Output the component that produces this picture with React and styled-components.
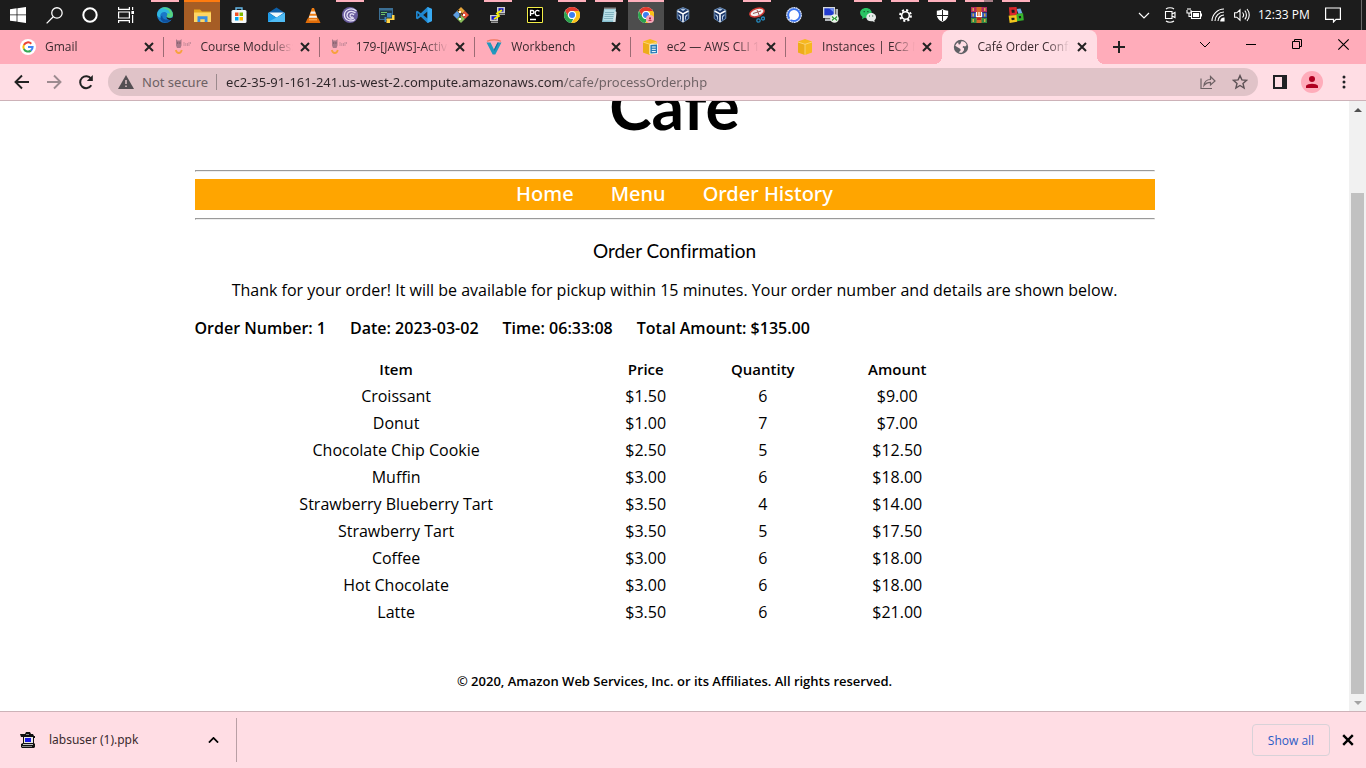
import React from "react";
import styled, { createGlobalStyle, css } from "styled-components";

const GlobalStyle = createGlobalStyle`
  *, *::before, *::after { box-sizing: border-box; }
  body { margin: 0; background: #fff; }
  button, input { font: inherit; color: inherit; }
`;

const uiFont = `"Segoe UI", "Noto Sans", sans-serif`;
const compactFont = `"Segoe UI", "Open Sans", sans-serif`;
const pageFont = `"Lucida Sans", "Lucida Grande", "Open Sans", sans-serif`;
const comicFont = `"Comic Sans MS", "Lato", sans-serif`;

const Shell = styled.div`
  display: flex;
  flex-direction: column;
  height: 100vh;
  overflow: hidden;
  font-family: ${uiFont};
  font-size: 12px;
`;

const PlainButton = styled.button`
  display: flex;
  align-items: center;
  justify-content: center;
  flex: none;
  padding: 0;
  border: 0;
  background: transparent;
`;

/* ---------- Taskbar ---------- */

const Taskbar = styled.header`
  display: flex;
  flex: none;
  height: 30px;
  background: #1c1c1c;
  color: #fff;
`;

const SystemKeys = styled.div`
  display: flex;
  margin-right: 3px;
`;

const AppKeys = styled.nav`
  display: flex;
  gap: 1px;
  flex: 1;
`;

const TaskKey = styled(PlainButton)`
  position: relative;
  width: 36px;
  height: 30px;
  background: ${(p) => p.$fill || "transparent"};
  ${(p) =>
    p.$mark &&
    css`
      &::before {
        content: "";
        position: absolute;
        top: 0;
        left: ${p.$wide ? 0 : 4}px;
        right: ${p.$wide ? 0 : 4}px;
        height: 2px;
        background: ${p.$mark};
      }
    `}
`;

const Tray = styled.div`
  display: flex;
  align-items: center;
  gap: 8px;
  padding-right: 4px;
`;

const Overflow = styled(PlainButton)`
  width: 12px;
  height: 30px;
  margin-right: 4px;
`;

const Clock = styled.time`
  font-family: ${compactFont};
  font-size: 12px;
  line-height: 16px;
  width: 59px;
  white-space: nowrap;
`;

const DesktopEdge = styled.span`
  width: 1px;
  height: 30px;
  margin-left: 12px;
  background: #6a6a6a;
`;

/* ---------- Tab strip ---------- */

const TabStrip = styled.div`
  display: flex;
  flex: none;
  height: 34px;
  padding-left: 9px;
  background: #ffacba;
`;

const TabList = styled.div`
  display: flex;
  flex: 1;
  min-width: 0;
`;

const Tab = styled.div`
  position: relative;
  display: flex;
  align-items: center;
  flex: 1 1 0;
  min-width: 0;
  padding: 0 7px 0 11px;
  border-radius: 8px 8px 0 0;
  background: ${(p) => (p.$active ? "#ffdde4" : "transparent")};
  ${(p) =>
    p.$divider &&
    css`
      &::after {
        content: "";
        position: absolute;
        right: 0;
        top: 7px;
        width: 1px;
        height: 20px;
        background: #9c6b74;
      }
    `}
  ${(p) =>
    p.$active &&
    css`
      &::before,
      &::after {
        content: "";
        position: absolute;
        bottom: 0;
        width: 8px;
        height: 8px;
      }
      &::before {
        left: -8px;
        background: radial-gradient(circle at 0 0, #ffacba 8px, #ffdde4 8px);
      }
      &::after {
        right: -8px;
        background: radial-gradient(circle at 100% 0, #ffacba 8px, #ffdde4 8px);
      }
    `}
`;

const TabTitle = styled.span`
  flex: 1;
  min-width: 0;
  margin: 0 4px 0 9px;
  overflow: hidden;
  white-space: nowrap;
  font-family: ${compactFont};
  line-height: 18px;
  color: #3a2a2e;
  mask-image: linear-gradient(90deg, #000 75%, transparent 100%);
`;

const TabClose = styled(PlainButton)`
  width: 16px;
  height: 16px;
  color: #222;
`;

const StripEnd = styled.div`
  display: flex;
  justify-content: space-between;
  flex: none;
  width: 269px;
`;

const NewTab = styled(PlainButton)`
  width: 28px;
  height: 34px;
  margin-left: 8px;
`;

const WindowKeys = styled.div`
  display: flex;
`;

const WindowKey = styled(PlainButton)`
  width: 46px;
  height: 28px;
`;

/* ---------- Toolbar ---------- */

const Toolbar = styled.div`
  display: flex;
  align-items: center;
  flex: none;
  height: 37px;
  padding: 0 6px;
  border-bottom: 1px solid #cdb2b8;
  background: #ffdde4;
`;

const ToolKey = styled(PlainButton)`
  width: 32px;
  height: 28px;
`;

const AddressBar = styled.form`
  display: flex;
  align-items: center;
  flex: 1;
  height: 28px;
  margin: 0 6px;
  padding: 0 2px 0 10px;
  border-radius: 14px;
  background: #e0c3c8;
`;

const Security = styled(PlainButton)`
  gap: 8px;
  padding-right: 8px;
  border-right: 1px solid #9b8a8d;
  font-size: 13px;
  line-height: 16px;
  color: #6d6164;
`;

/* The host is darker than the path that follows it. */
const Address = styled.input`
  flex: 1;
  min-width: 0;
  height: 24px;
  margin-left: 9px;
  padding: 0;
  border: 0;
  outline: 0;
  font-size: 13px;
  color: #2e2629;
  background: linear-gradient(90deg, #2e2629 338px, #6d6164 338px);
  background-clip: text;
  -webkit-text-fill-color: transparent;
`;

const Avatar = styled.span`
  display: flex;
  align-items: center;
  justify-content: center;
  width: 22px;
  height: 22px;
  border-radius: 50%;
  background: #ffacba;
`;

/* ---------- Web page ---------- */

const Viewport = styled.div`
  display: flex;
  flex: 1;
  min-height: 0;
  background: #fff;
`;

const Scroller = styled.div`
  display: flex;
  flex-direction: column;
  justify-content: flex-end;
  flex: 1;
  min-width: 0;
  overflow: hidden;
`;

const Page = styled.main`
  width: 960px;
  max-width: 100%;
  margin: 0 auto;
  padding-bottom: 20px;
  font-family: ${pageFont};
  font-size: 16px;
  line-height: 22px;
  color: #000;
  text-align: center;
`;

const SiteTitle = styled.h1`
  margin: 0 0 24px;
  font-family: ${comicFont};
  font-size: 64px;
  font-weight: 700;
  line-height: 80px;
  font-variant-ligatures: none;
`;

const Rule = styled.hr`
  height: 2px;
  margin: 0;
  border: 1px solid;
  border-color: #9a9a9a #eee #eee #9a9a9a;
`;

const SiteNav = styled.nav`
  display: flex;
  justify-content: center;
  gap: 37px;
  margin: 7px 0 8px;
  background: #ffa500;
  font-family: "Lucida Sans", "Noto Sans", sans-serif;
  font-size: 20px;
  line-height: 30px;
  padding-bottom: 1px;
  font-weight: 500;
`;

const NavLink = styled.a`
  color: #fff;
  text-decoration: none;
`;

const Heading = styled.h2`
  margin: 18px 0 15px;
  font-family: ${comicFont};
  font-size: 19px;
  font-weight: 400;
  line-height: 26px;
  font-variant-ligatures: none;
`;

const Message = styled.p`
  margin: 0 0 16px;
`;

const Summary = styled.p`
  display: flex;
  gap: 24px;
  margin: 0 0 16px;
  font-weight: 600;
`;

const OrderTable = styled.table`
  width: 80%;
  table-layout: fixed;
  border-collapse: collapse;
`;

const Col = styled.col`
  width: ${(p) => p.$share}%;
`;

const HeadCell = styled.th`
  height: 27px;
  padding: 0;
  font-size: 15px;
  font-weight: 600;
`;

const Cell = styled.td`
  height: 27px;
  padding: 0;
`;

const Copyright = styled.footer`
  margin-top: 46px;
  font-size: 13px;
  line-height: 20px;
  font-weight: 600;
`;

const ScrollBar = styled.div`
  display: flex;
  flex-direction: column;
  align-items: center;
  justify-content: space-between;
  flex: none;
  width: 17px;
  background: #f1f1f1;
`;

const ScrollKey = styled(PlainButton)`
  width: 17px;
  height: 17px;
`;

const ScrollTrack = styled.div`
  display: flex;
  flex-direction: column;
  justify-content: flex-end;
  flex: 1;
  width: 13px;
`;

const ScrollThumb = styled.div`
  height: 87%;
  background: #c1c1c1;
`;

/* ---------- Downloads ---------- */

const Downloads = styled.footer`
  display: flex;
  align-items: center;
  flex: none;
  height: 57px;
  padding: 0 10px 0 20px;
  border-top: 1px solid #cdb2b8;
  background: #ffdde4;
`;

const DownloadItem = styled.div`
  display: flex;
  align-items: center;
  width: 217px;
  height: 44px;
  border-right: 1px solid #b99fa5;
`;

const FileName = styled.a`
  flex: 1;
  margin-left: 13px;
  color: #3a2a2e;
  line-height: 18px;
  text-decoration: none;
`;

const FileMenu = styled(PlainButton)`
  width: 16px;
  height: 16px;
  margin-right: 15px;
`;

const ShowAll = styled(PlainButton)`
  width: 78px;
  height: 32px;
  margin-left: auto;
  border: 1px solid #d8d2d8;
  border-radius: 4px;
  font-family: ${compactFont};
  color: #2a5bc4;
`;

const CloseBar = styled(PlainButton)`
  width: 16px;
  height: 16px;
  margin-left: 10px;
`;

/* ---------- Icons ---------- */

const Svg = ({ s = 16, w = s, h = s, vb = "0 0 16 16", children, ...rest }) => (
  <svg width={w} height={h} viewBox={vb} fill="none" aria-hidden="true" {...rest}>
    {children}
  </svg>
);

const Cross = ({ s = 10, weight = 2 }) => (
  <Svg s={s} vb="0 0 10 10" stroke="currentColor" strokeWidth={weight}>
    <path d="M1 1l8 8M9 1L1 9" />
  </Svg>
);

const WindowsLogo = () => (
  <Svg>
    <path fill="#fff" d="M0 2.2l6.6-.9v6.2H0zM7.4 1.2L16 0v7.5H7.4zM0 8.3h6.6v6.3L0 13.7zM7.4 8.3H16V16l-8.6-1.2z" />
  </Svg>
);
const SearchIcon = () => (
  <Svg s={17} stroke="#fff" strokeWidth="1.2">
    <circle cx="10.3" cy="5.6" r="4.9" />
    <path d="M6.8 9.2L.6 15.4" />
  </Svg>
);
const CortanaIcon = () => (
  <Svg s={16} stroke="#fff" strokeWidth="2">
    <circle cx="8" cy="8" r="6.7" />
  </Svg>
);
const TaskViewIcon = () => (
  <Svg stroke="#fff" strokeWidth="1.2">
    <path d="M.6 0v2.4h10.8V0M.6 16v-2.4h10.8V16M.6 5h10.8v6H.6zM14.6 0v3M14.6 8v8" />
    <path d="M13.4 4h2.6v3h-2.6z" fill="#fff" stroke="none" />
  </Svg>
);
const EdgeIcon = () => (
  <Svg>
    <circle cx="8" cy="8" r="8" fill="#1a78c8" />
    <path fill="#56d37f" d="M3 2C6 -.6 11-.4 14 3c2.300 2.600 2.600 6 .8 7.200-1.200.8-4 .9-5 0-.8-.8.8-1.500.4-3.400C9.600 4 6 2.600 3 2z" />
    <path fill="#2fb6df" d="M0 8C.2 3.500 3.500 1 7 1.400c4 .4 6.200 3.200 6 5.600-.8-.8-1.800-1-2.600-.4C9 4.800 6.500 4.400 4.500 6 3 7.500 3 9.500 3.800 11 2 10.500.6 9.500 0 8z" />
    <path fill="#0f519f" d="M5.200 8.500c-.2 4 4.300 5.500 9.300 3.300C12 16.500 5 17 3.500 11.500c.1-1.600.7-2.500 1.700-3z" />
    <path fill="#1c1c1c" d="M9.600 9.600c.5 1.700 3.600 2 6.400 1l-1 1.800c-2.600 1.200-5.800.2-5.400-2.800z" />
  </Svg>
);
const FolderIcon = () => (
  <Svg w={17} h={15} vb="0 0 17 15">
    <path fill="#e8a71d" d="M0 1.500h6l2 2h9v3H0z" />
    <path fill="#ffd664" d="M0 4.500h17V14H0z" />
    <path fill="#3b8fe0" d="M3.500 14V8.200h10V14h-2.800v-2.800H6.300V14z" />
  </Svg>
);
const StoreIcon = () => (
  <Svg>
    <path stroke="#66b8e8" strokeWidth="1.400" d="M5 4V1h6v3" />
    <rect x=".5" y="3" width="15" height="13" rx="1.500" fill="#f4f8fb" />
    <path fill="#f25022" d="M4 5.500h3.500V9H4z" />
    <path fill="#7fba00" d="M8.500 5.500H12V9H8.500z" />
    <path fill="#00a4ef" d="M4 10h3.500v3.500H4z" />
    <path fill="#ffb900" d="M8.500 10H12v3.500H8.500z" />
  </Svg>
);
const MailIcon = () => (
  <Svg w={17} h={16} vb="0 0 17 16">
    <path fill="#0e5fa8" d="M0 6l8.500-5.500L17 6v2H0z" />
    <path fill="#eef8fd" d="M1 5.500h15L8.500 11z" />
    <path fill="#1f9ce8" d="M0 5.500l8.500 5 8.500-5V15H0z" />
    <path fill="#50bcf5" d="M0 15L17 6v9z" />
  </Svg>
);
const ConeIcon = () => (
  <Svg>
    <path fill="#ef7d12" d="M7 1h2l4 11H3z" />
    <path fill="#f2f2f2" d="M6 4.500h4l.8 2.300H5.200zM4.500 8.700h7l.7 2H3.800z" />
    <path fill="#e06c08" d="M2.500 11.500h11L15.500 16H.5z" />
    <path fill="#f7a24b" d="M4 12h8v1.500H4z" />
  </Svg>
);
const BitTorrentIcon = () => (
  <Svg>
    <circle cx="8" cy="8" r="8" fill="#695c9e" />
    <path
      stroke="#e6e1f5"
      strokeWidth="1.300"
      d="M14.500 4C9-.5 2 3 2.400 8.500c.5 5 7 7 10.600 4M13.500 6C9.500 2.500 4.800 5 5 8.800c.4 3.200 4.500 4.200 7 2M12 8c-1.800-2-4-1-4 .8 0 1.300 1.700 1.900 2.900 1"
    />
  </Svg>
);
const IdleIcon = () => (
  <Svg>
    <path fill="#3c6f94" d="M0 1h14v12H0z" />
    <path fill="#1f3847" d="M1 3.500h12V12H1z" />
    <path stroke="#70c26a" d="M2 5.500h6M2 7.500h4" />
    <path fill="#3d83bd" d="M8 6h4.500v4.500H7V15H5.500v-5H8z" />
    <path fill="#ffd345" d="M15.500 8v5H11v3H7.500v-4.500H13V8z" />
  </Svg>
);
const CodeIcon = () => (
  <Svg>
    <path
      fill="#1f87d0"
      d="M11.500 0L16 2v12l-4.500 2L4.800 9.700 1.500 12.300 0 11.500v-7l1.500-.8 3.300 2.600zM11.500 4.600L7.200 8l4.300 3.400zM1.600 6v4l2-2z"
      fillRule="evenodd"
    />
    <path fill="#38aaf2" d="M11.500 0L16 2v12l-4.500 2z" />
  </Svg>
);
const GitIcon = () => (
  <Svg>
    <path fill="#e6a43a" d="M8 0l4 4-4 4-4-4z" />
    <path fill="#5d9de0" d="M4 4l4 4-4 4-4-4z" />
    <path fill="#e7553b" d="M12 4l4 4-4 4-4-4z" />
    <path fill="#8bbf5c" d="M8 8l4 4-4 4-4-4z" />
    <path stroke="#1b1b1b" d="M5 3l6.500 6M7 5v8" />
    <path fill="#fff" d="M6 4h2v2H6zM10 7h2v2h-2zM6 11h2v2H6z" />
  </Svg>
);
const Computer = ({ x, y }) => (
  <g transform={`translate(${x} ${y})`}>
    <path fill="#ccc" d="M0 0h8v6H0z" />
    <path fill="#1616c8" d="M1.500 1.200h5v3.500h-5z" />
    <path fill="#999" d="M1 6.500h7V8H1z" />
  </g>
);
const PuttyIcon = () => (
  <Svg>
    <Computer x={7} y={0} />
    <Computer x={0} y={8} />
    <path stroke="#f4f000" strokeWidth="1.800" d="M12 3L7 6.500l2 2.500-5 3" />
  </Svg>
);
const PyCharmIcon = () => (
  <Svg>
    <path fill="#000" stroke="#f3ee46" d="M.5.5h15v15H.5z" />
    <path
      stroke="#fff"
      strokeWidth="1.300"
      d="M3.500 9V3.500h1.800a1.600 1.600 0 010 3.200H3.500M12.500 4.200c-3-2-4.500 0-4.300 2.200.2 2.200 2.300 3 4.300 1.600M3 12.500h6"
    />
  </Svg>
);
const ChromeIcon = ({ badge }) => (
  <Svg>
    <circle cx="8" cy="8" r="8" fill="#fff" />
    <path fill="#e33b2e" d="M1.100 4A8 8 0 0115 4.100H8A4 4 0 004.500 9.800z" />
    <path fill="#2ba24c" d="M1.100 4l3.500 6A4 4 0 008 12l1.400-.2L7.300 16A8 8 0 011.100 4z" />
    <path fill="#fbc116" d="M15 4.100A8 8 0 017.300 16l4.200-6A4 4 0 0011 5.200L9 4.100z" />
    <circle cx="8" cy="8" r="3.900" fill="#fff" />
    <circle cx="8" cy="8" r="3" fill="#3d7ff0" />
    {badge && <circle cx="12" cy="12" r="4" fill="#f7a8b8" />}
    {badge && <circle cx="12" cy="11.200" r="1" fill="#ad0b34" />}
    {badge && <path d="M10.200 13.800c.4-1.500 3.200-1.500 3.600 0z" fill="#ad0b34" />}
  </Svg>
);
const NotepadIcon = () => (
  <Svg>
    <path fill="#86bfcf" d="M3 2h12l-1.500 13H1z" />
    <path fill="#b9e0e8" d="M3.500 3h10.800L13 13.500H2z" />
    <path stroke="#5d93a5" d="M4 5.500h9M3.700 7.500h9M3.400 9.500h9M3 11.500h9" strokeWidth=".6" />
    <path stroke="#e8edf0" strokeDasharray="1 1" strokeWidth="2" d="M3.500 1.500h11" />
    <path fill="#d7e4e8" d="M14 4l1.500 1-1 10H12z" />
  </Svg>
);
const BoxIcon = () => (
  <Svg>
    <path fill="#1b3668" stroke="#7fa4cf" strokeWidth=".8" d="M8 .6L13.800 3v8.500L8 15.400l-5.800-3.900V3z" />
    <path stroke="#fff" strokeWidth="1.500" d="M2.600 4L8 7l5.400-3M8 7v8" />
    <path fill="#b5cae3" d="M3.500 7L6 9v4l-1-.8V10L3.500 8.500zM12.500 7L10 9v4l1-.8V10l1.500-1.500zM5.500 2.500L8 1.500l2.500 1L8 4z" />
  </Svg>
);
const SnipIcon = () => (
  <Svg>
    <ellipse cx="8" cy="5.500" rx="7.400" ry="4" transform="rotate(-18 8 5.500)" fill="#f4f1f1" stroke="#d23a35" strokeWidth="1.500" />
    <path stroke="#9a5655" d="M4 6.500l8-2.500M8 3l3 7" />
    <circle cx="9.500" cy="13.500" r="1.700" stroke="#2589bd" strokeWidth="1.300" />
    <circle cx="14" cy="11.500" r="1.500" stroke="#2589bd" strokeWidth="1.300" />
  </Svg>
);
const SignalIcon = () => (
  <Svg>
    <circle cx="8" cy="8" r="7.300" fill="#3c75ef" stroke="#dfe8fd" strokeWidth="1.200" strokeDasharray="2 .4" />
    <path fill="#fff" d="M8 3a5 5 0 11-2.200 9.500l-2.600.6.700-2.500A5 5 0 018 3z" />
  </Svg>
);
const RemoteIcon = () => (
  <Svg>
    <path fill="#d5d9dc" d="M0 0h12v11H0z" />
    <path fill="#223bd0" d="M1.300 1.300h9.400v7H1.300z" />
    <path fill="#7290f0" d="M6 1.300h4.700v4z" />
    <path fill="#b3b7bb" d="M12.500 2H15v8h-2.500zM2 11.500h7V14H2z" />
    <circle cx="11.500" cy="11.500" r="4.300" fill="#ecf4ea" />
    <path stroke="#2d9b38" strokeWidth="1.200" d="M9 9.500l2 2-2 2M14 9.500l-2 2 2 2" />
  </Svg>
);
const WeChatIcon = () => (
  <Svg>
    <path
      fill="#2bc464"
      d="M6 1c3.400 0 5.800 2.200 5.800 5s-2.400 5-5.800 5l-1.500-.2L2 12.300l.5-2.300A4.900 4.900 0 01.1 6C.1 3.200 2.600 1 6 1z"
    />
    <path
      fill="#e7ebe9"
      d="M11 6c2.900 0 5 1.900 5 4.200 0 1.300-.7 2.500-1.700 3.200l.4 1.800-2-1c-4 .7-6.400-1.500-6.400-4C6.300 7.900 8.300 6 11 6z"
    />
    <path fill="#174f2d" d="M3.600 4h1.200v1.200H3.600zM7.300 4h1.200v1.200H7.300zM9 8.500h1v1H9zM12.200 8.500h1v1h-1z" />
  </Svg>
);
const GearIcon = () => (
  <Svg s={13} stroke="#fff">
    <circle cx="8" cy="8" r="6.600" strokeWidth="2.600" strokeDasharray="2.600 2.580" />
    <circle cx="8" cy="8" r="4.700" strokeWidth="1.900" />
  </Svg>
);
const ShieldIcon = () => (
  <Svg s={13}>
    <path fill="#fff" d="M8 0c2 1.600 4 2 7 2.200v5C15 11 12 14.500 8 16 4 14.500 1 11 1 7.200v-5C4 2 6 1.600 8 0z" />
    <path stroke="#1c1c1c" strokeWidth="1.200" d="M8 1v14M1 8h14" />
  </Svg>
);
const WinRarIcon = () => (
  <Svg>
    <path fill="#b52b62" d="M0 0h16v5H0z" />
    <path fill="#3557bd" d="M0 5.500h16v5H0z" />
    <path fill="#328a42" d="M0 11h16v5H0z" />
    <path fill="#d7aa42" d="M1.500 1H3v3H1.500zM13 1h1.500v3H13zM1.500 6.500H3v3H1.500zM13 6.500h1.500v3H13zM1.500 12H3v3H1.500zM13 12h1.500v3H13z" />
    <path fill="#d6692a" d="M5.500 0h5v16h-5z" />
    <path stroke="#fff" strokeWidth="1.200" d="M5.500 5v4.500h5V5M8 5v4" />
    <path fill="#b51f1f" d="M6 10.500h4V13H6z" />
  </Svg>
);
const BlocksIcon = () => (
  <Svg>
    <path fill="#72afe3" d="M8.500 2l4-.5 2 5-4 .5z" />
    <path stroke="#d9272c" strokeWidth="2.400" d="M2.200 1.500l5.300-.3.500 5.600-5.300.4z" />
    <path stroke="#35b42b" strokeWidth="2.400" d="M9.500 8l4.500-.5.5 4.700-4.500.6z" />
    <path stroke="#f1c51d" strokeWidth="2.400" d="M2 9.800l5.500-.5.400 4.500-5.200.8z" />
  </Svg>
);

const Chevron = ({ w = 12, weight = 1.2, up }) => (
  <Svg w={w} h={w / 2 + 1} vb="0 0 12 7" stroke="currentColor" strokeWidth={weight}>
    <path d={up ? "M1 6l5-5 5 5" : "M1 1l5 5 5-5"} />
  </Svg>
);
const MeetIcon = () => (
  <Svg stroke="#fff" strokeWidth="1.100">
    <path d="M3.500 4.500h6.500v7H3.500zM10 7l3-1.500v5L10 9M4 2c2-1.600 6-1.600 8 0M4 14c2 1.600 6 1.600 8 0" />
  </Svg>
);
const BatteryIcon = () => (
  <Svg stroke="#fff" strokeWidth="1.100">
    <path d="M5.500 4.500h9v7h-9zM15.500 6.500v3M1 3v3h4V3M2 1v2M4 1v2M3 6v3.500h2" />
    <path fill="#fff" stroke="none" d="M7 6h6v4H7z" />
  </Svg>
);
const WifiIcon = () => (
  <Svg stroke="#fff" strokeWidth="1.100">
    <path d="M2 14C2 7.500 7.500 2 14 2M5 14c0-5 4-9 9-9M8 14c0-3.300 2.700-6 6-6" />
    <path d="M10.800 14a3 3 0 013.200-3v3z" fill="#fff" />
  </Svg>
);
const VolumeIcon = () => (
  <Svg stroke="#fff" strokeWidth="1.100">
    <path d="M.6 5.800h2.200L6 2.800v10.400l-3.200-3H.600zM8.500 5.500c1.300 1.400 1.300 3.600 0 5M10.800 3.600c2.200 2.500 2.200 6.300 0 8.800M13 2c3 3.500 3 8.500 0 12" />
  </Svg>
);
const NoticeIcon = () => (
  <Svg stroke="#fff" strokeWidth="1.200">
    <path d="M.6 1h14.800v11.400H11L8.500 15v-2.600H.6z" />
  </Svg>
);

const GoogleIcon = () => (
  <Svg>
    <circle cx="8" cy="8" r="8" fill="#fff" />
    <g strokeWidth="2">
      <path stroke="#ea4335" d="M11.300 4.700A4.600 4.600 0 003.900 6" />
      <path stroke="#fbbc05" d="M3.900 5.900a4.600 4.600 0 000 4.200" />
      <path stroke="#34a853" d="M3.900 10a4.600 4.600 0 007 1.600" />
      <path stroke="#4285f4" d="M8 8h4.600a4.600 4.600 0 01-1.700 3.600" />
    </g>
  </Svg>
);
const CourseIcon = () => (
  <Svg>
    <g fill="#9a7080">
      <path d="M1 0l1.500 1.500h2.500L6.500 0v6.500L5.500 9h-3.500L1 6.500z" opacity=".85" />
      <path d="M8.500 3h1v4h-1zM10.300 4h1v3h-1zM12 4h1v3h-1zM13.500 3h1v4h-1zM15 3h1v2h-1z" opacity=".5" />
    </g>
    <path fill="#5c4550" d="M2.200 3.500h1v1h-1zM4.400 3.500h1v1h-1z" />
    <path stroke="#f6a13c" strokeWidth="1.800" d="M.8 11c1 4 5 4 6 0" />
  </Svg>
);
const WorkbenchIcon = () => (
  <Svg>
    <path fill="#2298bd" d="M.5 3.500h4L8 10.500l3.500-7h4L9.300 15.500H6.700z" />
    <path stroke="#f0765b" strokeWidth="1.200" d="M1 2.200c4-1.600 10-1.600 14 0" />
    <path fill="#176e99" d="M8 10.500l3.500-7h1.200L8.500 12z" />
  </Svg>
);
const CubeIcon = ({ doc }) => (
  <Svg>
    <path fill="#f6b81f" d="M8 0l7 2.500v11L8 16l-7-2.500v-11z" />
    <path fill="#e09a16" d="M1 3.500l7 2V16l-7-2.500z" opacity=".4" />
    <path stroke="#fbd989" strokeWidth=".8" d="M1 3l7 2.300L15 3M8 5.300V16" />
    {doc && <path fill="#2479b5" stroke="#fff" strokeWidth=".8" d="M8 5.500l7.500-.5v9.500L8 15z" />}
    {doc && <path stroke="#fff" d="M9.800 8h4M9.800 10.300h4M9.800 12.600h4" />}
  </Svg>
);
const GlobeIcon = () => (
  <Svg>
    <circle cx="8" cy="8" r="7.200" fill="#5f6065" />
    <path
      fill="#ffdde4"
      d="M8.500 2.200c2.500-.2 4.600 1.400 5.200 3.700l-1.500 1.500-2-.3-.7 1.200 1.500 1v2l-1.800 2.300c-1.200.4-2.400.2-3.500-.4l1.800-1.500V10L5 8.500 2.200 6.800c.6-1.500 1.600-2.700 3-3.600l.3 2L7 5.500z"
    />
  </Svg>
);

const ArrowIcon = ({ flip }) => (
  <Svg stroke={flip ? "#9d8b90" : "#222"} strokeWidth="1.900">
    <path d={flip ? "M1 8h13M8 1.500L14.500 8 8 14.500" : "M15 8H2M8 1.500L1.500 8 8 14.500"} />
  </Svg>
);
const ReloadIcon = () => (
  <Svg stroke="#222" strokeWidth="2">
    <path d="M13.300 11.300A6 6 0 1113 4.600" />
    <path d="M14.800 1v6h-6z" fill="#222" stroke="none" />
  </Svg>
);
const WarningIcon = () => (
  <Svg w={16} h={14} vb="0 0 16 14">
    <path fill="#544f53" d="M8 0l8 14H0z" />
    <path stroke="#e0c3c8" strokeWidth="1.500" d="M8 5v4M8 10.500V12" />
  </Svg>
);
const ShareIcon = () => (
  <Svg stroke="#6d6164" strokeWidth="1.200">
    <path d="M1 4.500v10h11M4 11.500c.5-4 3-6 6.500-6v-3L15 7l-4.500 4V8.300C7.500 8.300 5.500 9.500 4 11.500z" />
  </Svg>
);
const StarIcon = () => (
  <Svg stroke="#5d5256" strokeWidth="1.400">
    <path d="M8 1.600l1.900 4.300 4.700.4-3.600 3.100 1.100 4.600L8 11.500 3.900 14 5 9.400 1.400 6.300l4.700-.4z" />
  </Svg>
);
const PanelIcon = () => (
  <Svg s={14} vb="0 0 14 14">
    <path stroke="#202124" strokeWidth="2" d="M1 1h12v12H1z" />
    <path fill="#202124" d="M9 1h4v12H9z" />
  </Svg>
);
const PersonIcon = () => (
  <Svg s={12} vb="0 0 12 12">
    <circle cx="6" cy="3" r="3" fill="#b00020" />
    <path fill="#b00020" d="M0 12V9.800C1.500 7 10.500 7 12 9.800V12z" />
  </Svg>
);
const DotsIcon = () => (
  <Svg>
    {[3, 8, 13].map((y) => (
      <circle key={y} cx="8" cy={y} r="1.500" fill="#202124" />
    ))}
  </Svg>
);
const PpkIcon = () => (
  <Svg>
    <path fill="#111" d="M0 2h5l1-2h4l1 2h2l1 2h1v2h-1v5l1 1v3l-1 1H2l-1-1v-3l2-1V5H1z" />
    <path fill="#e8e8e8" d="M4 5h9v6H4z" />
    <path fill="#1919e6" d="M5 6h6v4H5z" />
    <path fill="#c4c4c4" d="M3 12h10v1H3z" />
    <path fill="#858585" d="M6 2h3v1H6zM2 14h10v1H2z" />
  </Svg>
);

/* ---------- Data ---------- */

const pink = "#ffb0bd";

const systemKeys = [
  ["Start", WindowsLogo],
  ["Search", SearchIcon],
  ["Cortana", CortanaIcon],
  ["Task view", TaskViewIcon],
];

const apps = [
  { name: "Edge", icon: <EdgeIcon />, mark: pink },
  { name: "File Explorer", icon: <FolderIcon />, mark: "#ff7b0f", wide: true, fill: "#a65d25" },
  { name: "Store", icon: <StoreIcon /> },
  { name: "Mail", icon: <MailIcon /> },
  { name: "VLC", icon: <ConeIcon /> },
  { name: "BitTorrent", icon: <BitTorrentIcon />, mark: pink },
  { name: "IDLE", icon: <IdleIcon /> },
  { name: "Code", icon: <CodeIcon /> },
  { name: "Git", icon: <GitIcon /> },
  { name: "PuTTY", icon: <PuttyIcon />, mark: pink },
  { name: "PyCharm", icon: <PyCharmIcon /> },
  { name: "Chrome", icon: <ChromeIcon />, mark: pink },
  { name: "Notepad", icon: <NotepadIcon />, mark: pink },
  { name: "Chrome profile", icon: <ChromeIcon badge />, mark: pink, wide: true, fill: "#4d4d4d" },
  { name: "VirtualBox", icon: <BoxIcon /> },
  { name: "VirtualBox manager", icon: <BoxIcon /> },
  { name: "Snipping Tool", icon: <SnipIcon />, mark: pink },
  { name: "Signal", icon: <SignalIcon /> },
  { name: "Remote Desktop", icon: <RemoteIcon /> },
  { name: "WeChat", icon: <WeChatIcon />, mark: pink },
  { name: "Settings", icon: <GearIcon />, mark: pink },
  { name: "Security", icon: <ShieldIcon />, mark: pink },
  { name: "WinRAR", icon: <WinRarIcon />, mark: `linear-gradient(90deg, ${pink} 19px, #a77e86 19px)` },
  { name: "Blocks", icon: <BlocksIcon />, mark: pink },
];

const tabs = [
  { title: "Gmail", icon: <GoogleIcon /> },
  { title: "Course Modules:", icon: <CourseIcon /> },
  { title: "179-[JAWS]-Activ", icon: <CourseIcon /> },
  { title: "Workbench", icon: <WorkbenchIcon /> },
  { title: "ec2 — AWS CLI 1", icon: <CubeIcon doc /> },
  { title: "Instances | EC2 M", icon: <CubeIcon /> },
  { title: "Café Order Confi", icon: <GlobeIcon />, active: true },
];

const navItems = ["Home", "Menu", "Order History"];

const summary = ["Order Number: 1", "Date: 2023-03-02", "Time: 06:33:08", "Total Amount: $135.00"];

const columns = [
  ["Item", 52.5],
  ["Price", 12.5],
  ["Quantity", 18],
  ["Amount", 17],
];

const rows = [
  ["Croissant", "$1.50", "6", "$9.00"],
  ["Donut", "$1.00", "7", "$7.00"],
  ["Chocolate Chip Cookie", "$2.50", "5", "$12.50"],
  ["Muffin", "$3.00", "6", "$18.00"],
  ["Strawberry Blueberry Tart", "$3.50", "4", "$14.00"],
  ["Strawberry Tart", "$3.50", "5", "$17.50"],
  ["Coffee", "$3.00", "6", "$18.00"],
  ["Hot Chocolate", "$3.00", "6", "$18.00"],
  ["Latte", "$3.50", "6", "$21.00"],
];

export default function App() {
  return (
    <Shell>
      <GlobalStyle />
      <Taskbar>
        <SystemKeys>
          {systemKeys.map(([name, Icon]) => (
            <TaskKey key={name} aria-label={name}>
              <Icon />
            </TaskKey>
          ))}
        </SystemKeys>
        <AppKeys aria-label="Applications">
          {apps.map((a) => (
            <TaskKey key={a.name} aria-label={a.name} $mark={a.mark} $wide={a.wide} $fill={a.fill}>
              {a.icon}
            </TaskKey>
          ))}
        </AppKeys>
        <Tray>
          <Overflow aria-label="Hidden icons">
            <Chevron />
          </Overflow>
          <MeetIcon />
          <BatteryIcon />
          <WifiIcon />
          <VolumeIcon />
          <Clock>12:33 PM</Clock>
          <NoticeIcon />
          <DesktopEdge />
        </Tray>
      </Taskbar>

      <TabStrip>
        <TabList role="tablist">
          {tabs.map((t, i) => (
            <Tab key={t.title} role="tab" aria-selected={!!t.active} $active={t.active} $divider={i < 5}>
              {t.icon}
              <TabTitle>{t.title}</TabTitle>
              <TabClose aria-label="Close tab">
                <Cross />
              </TabClose>
            </Tab>
          ))}
        </TabList>
        <StripEnd>
          <NewTab aria-label="New tab">
            <Svg s={12} vb="0 0 12 12" stroke="#222" strokeWidth="2">
              <path d="M6 0v12M0 6h12" />
            </Svg>
          </NewTab>
          <WindowKeys>
            <WindowKey aria-label="Search tabs">
              <Chevron w={12} weight={1} />
            </WindowKey>
            <WindowKey aria-label="Minimize">
              <Svg s={10} vb="0 0 10 10" stroke="#000">
                <path d="M0 5.500h10" />
              </Svg>
            </WindowKey>
            <WindowKey aria-label="Restore">
              <Svg s={10} vb="0 0 10 10" stroke="#000">
                <path d="M.5 2.500h7v7h-7zM2.500 2.500v-2h7v7h-2" />
              </Svg>
            </WindowKey>
            <WindowKey aria-label="Close">
              <Cross s={13} weight={0.9} />
            </WindowKey>
          </WindowKeys>
        </StripEnd>
      </TabStrip>

      <Toolbar>
        <ToolKey aria-label="Back">
          <ArrowIcon />
        </ToolKey>
        <ToolKey aria-label="Forward">
          <ArrowIcon flip />
        </ToolKey>
        <ToolKey aria-label="Reload">
          <ReloadIcon />
        </ToolKey>
        <AddressBar>
          <Security type="button">
            <WarningIcon />
            Not secure
          </Security>
          <Address
            aria-label="Address"
            defaultValue="ec2-35-91-161-241.us-west-2.compute.amazonaws.com/cafe/processOrder.php"
          />
          <ToolKey type="button" aria-label="Share">
            <ShareIcon />
          </ToolKey>
          <ToolKey type="button" aria-label="Bookmark">
            <StarIcon />
          </ToolKey>
        </AddressBar>
        <ToolKey aria-label="Side panel">
          <PanelIcon />
        </ToolKey>
        <ToolKey aria-label="Profile">
          <Avatar>
            <PersonIcon />
          </Avatar>
        </ToolKey>
        <ToolKey aria-label="Menu">
          <DotsIcon />
        </ToolKey>
      </Toolbar>

      <Viewport>
        <Scroller>
          <Page>
            <SiteTitle>Café</SiteTitle>
            <Rule />
            <SiteNav>
              {navItems.map((n) => (
                <NavLink key={n} href="#">
                  {n}
                </NavLink>
              ))}
            </SiteNav>
            <Rule />
            <Heading>Order Confirmation</Heading>
            <Message>
              Thank for your order! It will be available for pickup within 15 minutes. Your order number and details
              are shown below.
            </Message>
            <Summary>
              {summary.map((s) => (
                <span key={s}>{s}</span>
              ))}
            </Summary>
            <OrderTable>
              <colgroup>
                {columns.map(([name, share]) => (
                  <Col key={name} $share={share} />
                ))}
              </colgroup>
              <thead>
                <tr>
                  {columns.map(([name]) => (
                    <HeadCell key={name} scope="col">
                      {name}
                    </HeadCell>
                  ))}
                </tr>
              </thead>
              <tbody>
                {rows.map((r) => (
                  <tr key={r[0]}>
                    {r.map((v, i) => (
                      <Cell key={i}>{v}</Cell>
                    ))}
                  </tr>
                ))}
              </tbody>
            </OrderTable>
            <Copyright>© 2020, Amazon Web Services, Inc. or its Affiliates. All rights reserved.</Copyright>
          </Page>
        </Scroller>
        <ScrollBar>
          <ScrollKey aria-label="Scroll up">
            <Svg w={8} h={4} vb="0 0 8 4">
              <path fill="#505050" d="M0 4l4-4 4 4z" />
            </Svg>
          </ScrollKey>
          <ScrollTrack>
            <ScrollThumb />
          </ScrollTrack>
          <ScrollKey aria-label="Scroll down">
            <Svg w={8} h={4} vb="0 0 8 4">
              <path fill="#a3a3a3" d="M0 0l4 4 4-4z" />
            </Svg>
          </ScrollKey>
        </ScrollBar>
      </Viewport>

      <Downloads>
        <DownloadItem>
          <PpkIcon />
          <FileName href="#">labsuser (1).ppk</FileName>
          <FileMenu aria-label="Download options">
            <Chevron w={11} weight={2} up />
          </FileMenu>
        </DownloadItem>
        <ShowAll>Show all</ShowAll>
        <CloseBar aria-label="Close downloads">
          <Cross s={12} />
        </CloseBar>
      </Downloads>
    </Shell>
  );
}
